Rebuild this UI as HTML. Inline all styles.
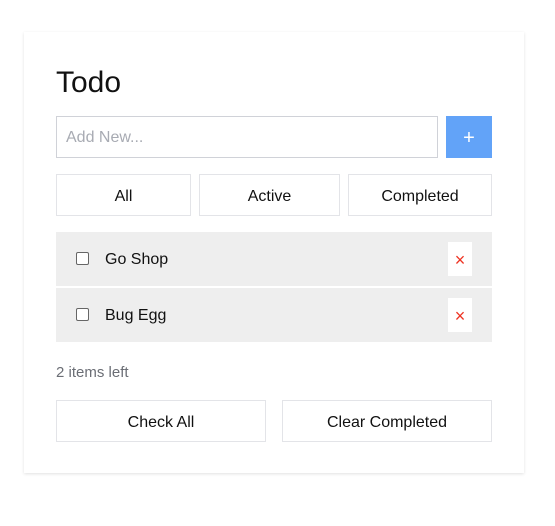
<!DOCTYPE html>
<html><head><style>
*{box-sizing:border-box;margin:0;padding:0}
body{width:555px;height:526px;background:#fff;font-family:"Segoe UI","Liberation Sans",sans-serif;position:relative;overflow:hidden;color:#111}
.card{position:absolute;left:24px;top:32px;width:500px;height:441px;background:#fff;box-shadow:0 1px 3px rgba(0,0,0,.12);}
.a{position:absolute}
h1{position:absolute;left:56px;top:64px;font-size:30px;font-weight:400;line-height:38px;color:#111}
.inp{left:56px;top:116px;width:382px;height:42px;border:1px solid #d0d2d8;font-size:16px;color:#a8abb3;padding:12px 0 0 9px}
.add{left:446px;top:116px;width:46px;height:42px;background:#62a3f8;color:#fff;font-size:20px;text-align:center;line-height:44px}
.btn{border:1px solid #e3e4e8;height:42px;text-align:center;line-height:43px;font-size:16px;color:#111;background:#fff}
.item{left:56px;width:436px;height:54px;background:#eeeeee}
.cb{position:absolute;left:20px;top:20px;width:13px;height:13px;border:1px solid #666;border-radius:2px;background:#fff}
.txt{position:absolute;left:49px;top:17px;font-size:16px;line-height:22px;color:#111}
.x{position:absolute;left:392px;top:10px;width:24px;height:34px;background:#fff;color:#e32;text-align:center;line-height:36px;font-size:18px}
.left{left:56px;top:364px;font-size:15px;color:#6b6e75}
</style></head><body>
<div class="card"></div>
<h1>Todo</h1>
<div class="a inp">Add New...</div>
<div class="a add">+</div>
<div class="a btn" style="left:56px;top:174px;width:135px">All</div>
<div class="a btn" style="left:199px;top:174px;width:141px">Active</div>
<div class="a btn" style="left:348px;top:174px;width:144px">Completed</div>
<div class="a item" style="top:232px"><div class="cb"></div><div class="txt">Go Shop</div><div class="x">×</div></div>
<div class="a item" style="top:288px"><div class="cb"></div><div class="txt">Bug Egg</div><div class="x">×</div></div>
<div class="a left">2 items left</div>
<div class="a btn" style="left:56px;top:400px;width:210px">Check All</div>
<div class="a btn" style="left:282px;top:400px;width:210px">Clear Completed</div>
</body></html>
